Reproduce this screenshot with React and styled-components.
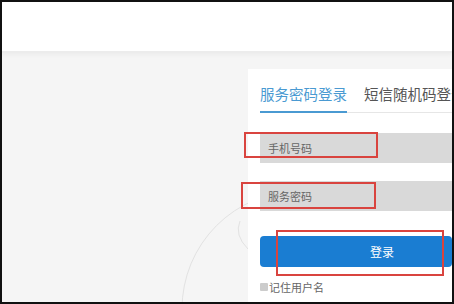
import styled, { createGlobalStyle } from 'styled-components';

const GlobalStyle = createGlobalStyle`
body {
  margin: 0;
  background: #111;
  font-family: "Noto Sans CJK SC", "Noto Sans", sans-serif;
}
* { box-sizing: border-box; }
`

const Frame = styled.div`
width: 454px;
height: 304px;
border: 2px solid #111;
background: #f5f5f5;
display: flex;
flex-direction: column;
overflow: hidden;
`

const Header = styled.div`
height: 51px;
flex-shrink: 0;
background: #fff;
border-bottom: 2px solid #ececec;
box-shadow: 0 2px 4px rgba(0,0,0,0.04);
`

const Main = styled.div`
flex: 1;
position: relative;
display: flex;
justify-content: flex-end;
padding-top: 16px;
`

const Deco = styled.svg`
position: absolute;
left: 0;
top: 0;
`

const Card = styled.div`
position: relative;
width: 204px;
flex-shrink: 0;
background: #fff;
padding: 15px 0 0 12px;
display: flex;
flex-direction: column;
`

const Tabs = styled.div`
display: flex;
gap: 17px;
border-bottom: 1px solid #e6e6e6;
white-space: nowrap;
`

const Tab = styled.div`
font-size: 14.5px;
line-height: 20px;
padding-bottom: 7px;
color: ${p => p.$active ? '#4a9ad2' : '#555'};
border-bottom: 2px solid ${p => p.$active ? '#4a9ad2' : 'transparent'};
margin-bottom: -1px;
`

const Field = styled.div`
height: 30px;
background: #d9d9d9;
margin-top: ${p => p.$top}px;
display: flex;
align-items: center;
padding-left: 8px;
font-size: 11px;
color: #666;
`

const Button = styled.div`
margin-top: 25px;
height: 31px;
background: #1a7dd2;
border-radius: 4px;
color: #fff;
font-size: 12px;
display: flex;
align-items: center;
justify-content: center;
padding-left: 52px;
`

const Remember = styled.label`
margin-top: 12px;
display: flex;
align-items: center;
font-size: 11px;
color: #666;
`

const Box = styled.span`
width: 8px;
height: 8px;
background: #ccc;
border-radius: 1px;
margin-right: 1px;
`

const Mark = styled.div`
position: absolute;
border: 2px solid #d9443f;
`

const App = () => {
    return (
        <>
            <GlobalStyle />
            <Frame>
                <Header />
                <Main>
                    <Deco width="250" height="250" viewBox="0 0 250 250">
                        <circle cx="298" cy="256" r="118" fill="none" stroke="#e2e2e2" strokeWidth="1" />
                        <path d="M238 168 Q 232 182 246 196" fill="none" stroke="#e2e2e2" strokeWidth="1" />
                    </Deco>
                    <Card>
                        <Tabs>
                            <Tab $active>服务密码登录</Tab>
                            <Tab>短信随机码登录</Tab>
                        </Tabs>
                        <Field $top={20}>手机号码</Field>
                        <Field $top={18}>服务密码</Field>
                        <Button>登录</Button>
                        <Remember><Box />记住用户名</Remember>
                        <Mark style={{ left: -4, top: 63, width: 134, height: 26 }} />
                        <Mark style={{ left: -7, top: 113, width: 135, height: 27 }} />
                        <Mark style={{ left: 28, top: 161, width: 168, height: 46 }} />
                    </Card>
                </Main>
            </Frame>
        </>
    );
}

export default App;
